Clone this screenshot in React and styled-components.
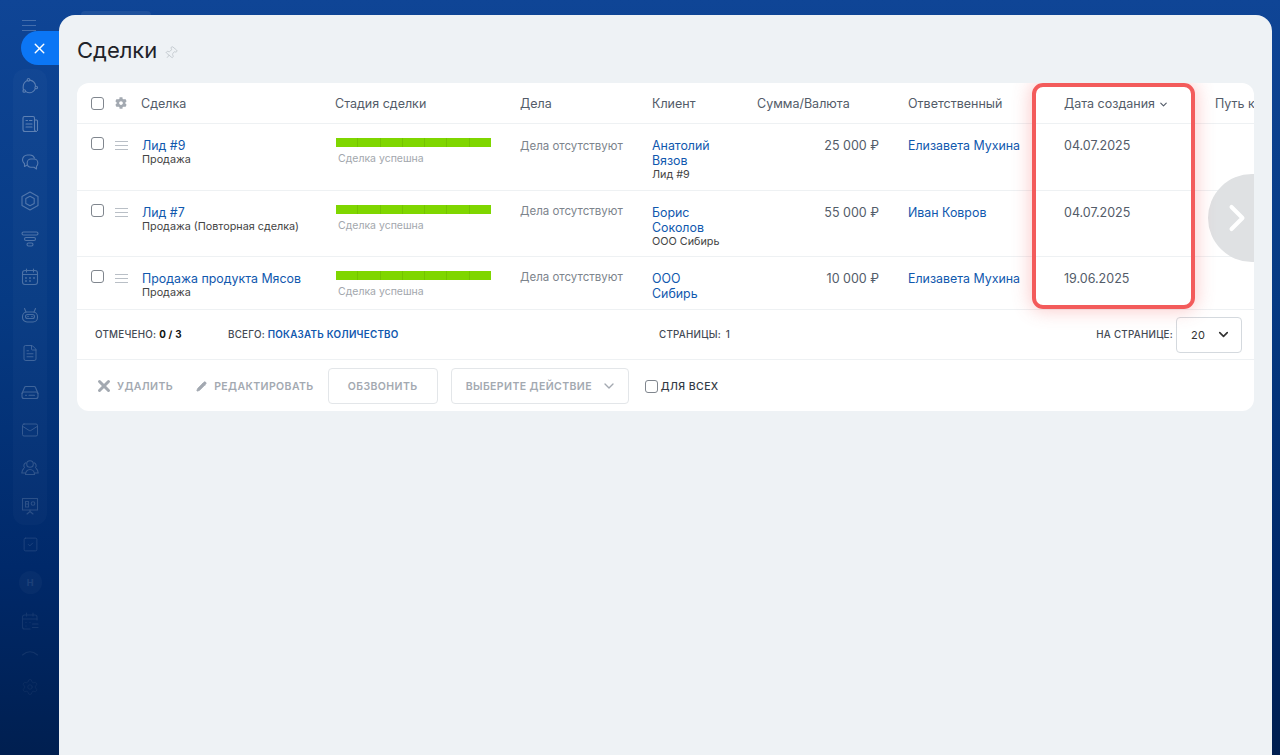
import React from 'react'
import styled, { createGlobalStyle } from 'styled-components'
import { X, ChevronDown, ChevronRight, Settings, Pin, Pencil, FileText, Mail, SquareCheck } from 'lucide-react'
import { FaCog } from 'react-icons/fa'

const GlobalStyle = createGlobalStyle`
  html, body {
    margin: 0;
    height: 100%;
    overflow: hidden;
    font-family: Inter, "Liberation Sans", sans-serif;
  }
  #root { height: 100%; }
`

const Page = styled.div`
  height: 755px;
  display: flex;
  background: linear-gradient(180deg, #0f4596 0%, #063a83 40%, #00296a 75%, #001f50 100%);
`

const Rail = styled.aside`
  width: 59px;
  flex-shrink: 0;
  display: flex;
  flex-direction: column;
  align-items: center;
`

const Burger = styled.div`
  height: 31px;
  padding-top: 20px;
  box-sizing: border-box;
  width: 14px;
  margin-left: -1px;
  & span {
    display: block;
    height: 1px;
    background: #ffffff3a;
    margin-bottom: 4px;
  }
`

const CloseTab = styled.button`
  align-self: flex-end;
  width: 38px;
  height: 34px;
  border: 0;
  padding: 0 2px 0 0;
  border-radius: 17px 0 0 17px;
  background: #0b76f5;
  color: #fff;
  display: flex;
  align-items: center;
  justify-content: center;
`

const IconList = styled.div`
  margin-top: 4px;
  margin-left: 1px;
  display: flex;
  flex-direction: column;
  align-items: center;
`

const IconGroup = styled.div`
  display: flex;
  flex-direction: column;
  align-items: center;
  border-radius: 12px;
  background: #ffffff06;
  & > :first-child { margin-top: -2px; }
`

const IconRow = styled.div`
  height: ${p => p.$h || 38.2}px;
  margin-bottom: ${p => p.$after || 0}px;
  width: 34px;
  display: flex;
  align-items: center;
  justify-content: center;
  color: #fff;
  & > * { opacity: ${p => p.$fade}; }
`

const Letter = styled.span`
  width: 23px;
  height: 23px;
  border-radius: 50%;
  background: #ffffff44;
  font-size: 9px;
  font-weight: 700;
  display: flex;
  align-items: center;
  justify-content: center;
`

const Main = styled.div`
  flex: 1;
  display: flex;
  flex-direction: column;
  padding: 11px 8px 0 0;
`

const PeekTab = styled.div`
  height: 4px;
  width: 70px;
  margin-left: 22px;
  border-radius: 6px 6px 0 0;
  background: #ffffff12;
`

const Sheet = styled.main`
  flex: 1;
  background: #eef2f5;
  border-radius: 16px 16px 0 0;
  padding: 0 18px;
`

const TitleRow = styled.div`
  height: 68px;
  padding-top: 1px;
  box-sizing: border-box;
  display: flex;
  align-items: center;
  gap: 7px;
  & svg {
    color: #c4cad0;
    margin-top: 6px;
    transform: rotate(40deg);
  }
`

const Title = styled.h1`
  margin: 0;
  font-size: 22px;
  font-weight: 400;
  color: #1f2329;
`

const Card = styled.section`
  position: relative;
  overflow: hidden;
  width: 1177px;
  background: #fff;
  border-radius: 12px;
`

const Table = styled.table`
  width: 1242px;
  table-layout: fixed;
  border-collapse: collapse;
  font-size: 12.5px;
`

const Col = styled.col`
  width: ${p => p.$w}px;
`

const Th = styled.th`
  height: 40px;
  padding: 0;
  font-weight: 400;
  text-align: left;
  color: #535c69;
  border-bottom: 1px solid #eef1f3;
  white-space: nowrap;
  overflow: hidden;
`

const SortIcon = styled(ChevronDown)`
  vertical-align: -2px;
  margin-left: -1px;
  color: #535c69;
`

const Td = styled.td`
  padding: 14px 0 0;
  vertical-align: top;
  border-bottom: 1px solid #eef1f3;
  color: #535c69;
  line-height: 15px;
  text-align: ${p => (p.$right ? 'right' : 'left')};
  height: ${p => p.$h}px;
  box-sizing: border-box;
`

const Check = styled.span`
  display: inline-block;
  width: 11px;
  height: 11px;
  border: 1px solid #80868e;
  border-radius: 3px;
  background: #fff;
  margin-left: 14px;
`

const HeadTools = styled.div`
  display: flex;
  align-items: center;
  gap: 11px;
  & svg { color: #a3a9b1; }
`

const Drag = styled.div`
  width: 13px;
  margin: 4px 0 0 11px;
  & span {
    display: block;
    height: 1px;
    margin-bottom: 3px;
    background: #b9bfc6;
  }
`

const RowTools = styled.div`
  display: flex;
  margin-top: -1px;
`

const LinkText = styled.a`
  display: block;
  color: #1058ae;
  font-size: 12.4px;
  line-height: 15px;
  white-space: nowrap;
`

const DealLink = styled(LinkText)`
  margin-left: 1px;
`

const SubText = styled.div`
  color: #444;
  font-size: 10.8px;
  line-height: 13px;
  margin-left: ${p => p.$inset || 0}px;
  white-space: nowrap;
`

const StageBar = styled.div`
  display: flex;
  width: 155px;
  height: 9px;
  margin-left: 1px;
  gap: 1px;
  border-radius: 1px;
  background: #74c400;
  & i { flex: 1; background: #7fd600; }
`

const StageLabel = styled.div`
  color: #a2a7ad;
  font-size: 10.5px;
  line-height: 13px;
  margin: 5px 0 0 3px;
`

const Muted = styled.span`
  display: block;
  margin-top: ${p => p.$shift}px;
  color: #7d848c;
  font-size: 11.5px;
`

const Amount = styled.div`
  padding-right: 29px;
  color: #535c69;
`

const PagerRow = styled.div`
  height: 49px;
  display: grid;
  grid-template-columns: 133px 431px 1fr auto;
  align-items: center;
  padding: 0 12px 0 18px;
  border-bottom: 1px solid #eef1f3;
  font-size: 9.8px;
  font-weight: 500;
  letter-spacing: 0.25px;
  color: #434a54;
  text-transform: uppercase;
`

const Strong = styled.b`
  color: #111;
  font-weight: 700;
`

const ShowCount = styled.a`
  color: #1058ae;
  font-weight: 600;
`

const PageNumber = styled.span`
  margin-left: 2px;
`

const PerPage = styled.div`
  display: flex;
  align-items: center;
  gap: 3px;
`

const PerPageBox = styled.div`
  width: 66px;
  height: 36px;
  box-sizing: border-box;
  border: 1px solid #d4d9de;
  border-radius: 4px;
  display: flex;
  align-items: center;
  justify-content: space-between;
  padding: 0 10px 0 14px;
  font-size: 11px;
  font-weight: 400;
  color: #333;
  & svg { color: #333; }
`

const ActionRow = styled.div`
  height: 51px;
  display: flex;
  align-items: flex-start;
  padding: 8px 0 0 21px;
  box-sizing: border-box;
  font-size: 10.5px;
  font-weight: 600;
  letter-spacing: 0.4px;
  color: #a3a9b1;
`

const ActionLink = styled.div`
  height: 36px;
  display: flex;
  align-items: center;
  gap: ${p => p.$inner}px;
  margin-right: ${p => p.$gap}px;
  & svg { color: #a3a9b1; }
`

const DeleteIcon = styled(X)`
  margin-left: -3px;
`

const EditIcon = styled(Pencil)`
  fill: #a3a9b1;
`

const GhostButton = styled.div`
  height: 36px;
  width: ${p => p.$w}px;
  box-sizing: border-box;
  border: 1px solid #e3e6e9;
  border-radius: 4px;
  display: flex;
  align-items: center;
  justify-content: ${p => (p.$between ? 'space-between' : 'center')};
  padding: ${p => (p.$between ? '0 11px 0 14px' : '0')};
  margin-right: ${p => p.$gap}px;
  & svg { color: #a3a9b1; }
`

const ForAll = styled.label`
  height: 36px;
  display: flex;
  align-items: center;
  gap: 3px;
  color: #333a45;
  font-weight: 500;
  & ${Check} { margin: 0; }
`

const Highlight = styled.div`
  position: absolute;
  left: 955px;
  top: 0;
  width: 163px;
  height: 226px;
  box-sizing: border-box;
  border: 4px solid #f35b5b;
  border-radius: 11px;
  box-shadow: 0 0 18px 2px #f35b5b4d;
  pointer-events: none;
`

const ScrollHint = styled.div`
  position: absolute;
  left: 1131px;
  top: 91px;
  width: 88px;
  height: 88px;
  border-radius: 50%;
  background: #dfe1e3;
  color: #fff;
  display: flex;
  align-items: center;
  padding-left: 7px;
  box-sizing: border-box;
`

/* nav icons drawn by hand, lucide has nothing close for these */
const Svg = ({ children }) => (
  <svg width="18" height="18" viewBox="0 0 18 18" fill="none" stroke="currentColor" strokeWidth="1.1" strokeLinecap="round" strokeLinejoin="round">
    {children}
  </svg>
)

const Orbit = () => (
  <Svg>
    <circle cx="7.500" cy="2.800" r="1.300" /><circle cx="15.200" cy="10.500" r="1.300" /><circle cx="3.200" cy="14" r="1.300" />
    <path d="M6.200 3.400A7 7 0 0 0 2.200 9.500a7 7 0 0 0 .3 3.200M9 3.100a7 7 0 0 1 5.600 6.100M14.300 11.600A7 7 0 0 1 9 15.800a7 7 0 0 1-4.400-1.400" />
  </Svg>
)
const News = () => (
  <Svg>
    <path d="M3.500 1.500h8.500a1.500 1.500 0 0 1 1.500 1.500v11.500a2 2 0 0 0 2 2H4a2 2 0 0 1-2-2V3a1.500 1.500 0 0 1 1.500-1.500z" />
    <path d="M13.500 5h2A1 1 0 0 1 16.500 6v9.500M5 5.500h1.500M8.500 5.500h2.500M5 9h6M5 12h6" />
  </Svg>
)
const Chats = () => (
  <Svg>
    <path d="M5.800 12.200 3.500 13.500v-2.800A5 5 0 0 1 1.500 7a5 5 0 0 1 5-5H9a5 5 0 0 1 4.500 3" />
    <path d="M10 6h3a3.800 3.800 0 0 1 3.800 3.800v.7a3.800 3.800 0 0 1-1.300 2.800V16l-2.500-1.800h-3a3.800 3.800 0 0 1-3.800-3.700v-.7A3.800 3.800 0 0 1 10 6z" />
  </Svg>
)
const Nut = () => (
  <svg width="20" height="20" viewBox="0 0 20 20" fill="none" stroke="currentColor" strokeWidth="1.1" strokeLinejoin="round">
    <path d="M10 1 18 5.500v9L10 19l-8-4.500v-9z" />
    <path d="M10 5.200 14.200 7.600v4.800L10 14.800l-4.200-2.400V7.600z" />
  </svg>
)
const Funnel = () => (
  <Svg>
    <rect x="1" y="2" width="16" height="3" rx="1.500" />
    <rect x="3.500" y="7.500" width="11" height="3" rx="1.500" />
    <rect x="6" y="13" width="6" height="3" rx="1.500" />
  </Svg>
)
const Planner = () => (
  <Svg>
    <rect x="1.500" y="2.500" width="15" height="14" rx="2.500" />
    <path d="M5.500 1v3M12.500 1v3M1.500 6.500h15" />
    <path d="M5 10h.01M9 10h.01M13 10h.01M5 13h.01M9 13h.01" strokeWidth="1.800" />
  </Svg>
)
const Robot = () => (
  <Svg>
    <rect x="1.500" y="6" width="15" height="10" rx="4.500" />
    <path d="M5 6 3.500 2.500M13 6l1.500-3.500" />
    <rect x="4.500" y="8.500" width="9" height="4" rx="2" />
    <path d="M7 10.500h.01M11 10.500h.01" strokeWidth="1.500" />
  </Svg>
)
const Drive = () => (
  <Svg>
    <path d="M1 10.500 3.500 4.500A1.500 1.500 0 0 1 5 3.500h8a1.500 1.500 0 0 1 1.500 1l2.500 6" />
    <rect x="1" y="9" width="16" height="6.500" rx="2" />
    <path d="M4.500 12.300h1M8 12.300h5.500" />
  </Svg>
)
const People = () => (
  <Svg>
    <circle cx="9" cy="5" r="3.300" />
    <path d="M4.500 15.500c0-3 2-5 4.500-5s4.500 2 4.500 5zM4.800 3.800A3 3 0 0 0 3.500 8.500M13.200 3.800A3 3 0 0 1 14.500 8.500M2.800 9.500C1.500 10.500 1 12 .8 14h3M15.200 9.500c1.300 1 1.800 2.500 2 4.500h-3" />
  </Svg>
)
const Board = () => (
  <Svg>
    <rect x="1.500" y="1.500" width="15" height="11.500" />
    <path d="M9 13v1.500M6 17l3-2.500 3 2.500M4.500 4.500h3v5.500h-3zM4.500 7h3" />
    <circle cx="12" cy="6.500" r="1.800" />
  </Svg>
)
const Schedule = () => (
  <Svg>
    <path d="M16 8V5a2 2 0 0 0-2-2H3.500a2 2 0 0 0-2 2v10a2 2 0 0 0 2 2H9" />
    <path d="M5.500 1v3M12 1v3M1.500 7H16M5 10.500h.01M9 10.500h.01M5 14h.01M11.500 12h5.500M11.500 15.500h5.500" />
  </Svg>
)
const Collapse = () => (
  <Svg><path d="M1.500 11Q9 4.500 16.500 11" /></Svg>
)

const groupIcons = [
  { el: <Orbit />, fade: 0.3 },
  { el: <News />, fade: 0.32 },
  { el: <Chats />, fade: 0.3 },
  { el: <Nut />, fade: 0.28 },
  { el: <Funnel />, fade: 0.27 },
  { el: <Planner />, fade: 0.26 },
  { el: <Robot />, fade: 0.25 },
  { el: <FileText size={18} strokeWidth={1.2} />, fade: 0.24 },
  { el: <Drive />, fade: 0.22 },
  { el: <Mail size={18} strokeWidth={1.2} />, fade: 0.2 },
  { el: <People />, fade: 0.17 },
  { el: <Board />, fade: 0.15 },
]

const looseIcons = [
  { el: <SquareCheck size={17} strokeWidth={1.2} />, fade: 0.13 },
  { el: <Letter>H</Letter>, fade: 0.11 },
  { el: <Schedule />, fade: 0.08 },
  { el: <Collapse />, fade: 0.07, h: 26, after: 5 },
  { el: <Settings size={18} strokeWidth={1.2} />, fade: 0.05, h: 32 },
]

const deals = [
  { id: 9, title: 'Лид #9', type: 'Продажа', client: ['Анатолий', 'Вязов'], sub: 'Лид #9', sum: '25 000 ₽', owner: 'Елизавета Мухина', date: '04.07.2025', h: 67, shift: 1 },
  { id: 7, title: 'Лид #7', type: 'Продажа (Повторная сделка)', client: ['Борис', 'Соколов'], sub: 'ООО Сибирь', sum: '55 000 ₽', owner: 'Иван Ковров', date: '04.07.2025', h: 66, shift: -1 },
  { id: 1, title: 'Продажа продукта Мясов', type: 'Продажа', client: ['ООО', 'Сибирь'], sum: '10 000 ₽', owner: 'Елизавета Мухина', date: '19.06.2025', h: 53, shift: -1 },
]

const columns = [64, 194, 185, 132, 105, 151, 156, 151, 104]

export default function App() {
  return (
    <Page>
      <GlobalStyle />
      <Rail>
        <Burger><span /><span /><span /></Burger>
        <CloseTab><X size={17} strokeWidth={2} /></CloseTab>
        <IconList>
          <IconGroup>
            {groupIcons.map((item, i) => (
              <IconRow key={i} $fade={item.fade}>{item.el}</IconRow>
            ))}
          </IconGroup>
          {looseIcons.map((item, i) => (
            <IconRow key={i} $fade={item.fade} $h={item.h} $after={item.after}>{item.el}</IconRow>
          ))}
        </IconList>
      </Rail>
      <Main>
        <PeekTab />
        <Sheet>
          <TitleRow>
            <Title>Сделки</Title>
            <Pin size={14} strokeWidth={1.5} />
          </TitleRow>
          <Card>
            <Table>
              <colgroup>
                {columns.map((w, i) => <Col key={i} $w={w} />)}
              </colgroup>
              <thead>
                <tr>
                  <Th>
                    <HeadTools>
                      <Check /><FaCog size={12} />
                    </HeadTools>
                  </Th>
                  <Th>Сделка</Th>
                  <Th>Стадия сделки</Th>
                  <Th>Дела</Th>
                  <Th>Клиент</Th>
                  <Th>Сумма/Валюта</Th>
                  <Th>Ответственный</Th>
                  <Th>Дата создания <SortIcon size={11} strokeWidth={2.5} /></Th>
                  <Th>Путь к</Th>
                </tr>
              </thead>
              <tbody>
                {deals.map(d => (
                  <tr key={d.id}>
                    <Td $h={d.h}>
                      <RowTools>
                        <Check />
                        <Drag><span /><span /><span /></Drag>
                      </RowTools>
                    </Td>
                    <Td $h={d.h}>
                      <DealLink>{d.title}</DealLink>
                      <SubText $inset={1}>{d.type}</SubText>
                    </Td>
                    <Td $h={d.h}>
                      <StageBar><i /><i /><i /><i /><i /><i /><i /></StageBar>
                      <StageLabel>Сделка успешна</StageLabel>
                    </Td>
                    <Td $h={d.h}><Muted $shift={d.shift}>Дела отсутствуют</Muted></Td>
                    <Td $h={d.h}>
                      {d.client.map(n => <LinkText key={n}>{n}</LinkText>)}
                      {d.sub && <SubText>{d.sub}</SubText>}
                    </Td>
                    <Td $h={d.h} $right><Amount>{d.sum}</Amount></Td>
                    <Td $h={d.h}><LinkText>{d.owner}</LinkText></Td>
                    <Td $h={d.h}>{d.date}</Td>
                    <Td $h={d.h} />
                  </tr>
                ))}
              </tbody>
            </Table>
            <PagerRow>
              <span>Отмечено: <Strong>0 / 3</Strong></span>
              <span>Всего: <ShowCount>показать количество</ShowCount></span>
              <span>Страницы:&nbsp;<PageNumber>1</PageNumber></span>
              <PerPage>
                На странице:
                <PerPageBox>20 <ChevronDown size={15} strokeWidth={2.6} /></PerPageBox>
              </PerPage>
            </PagerRow>
            <ActionRow>
              <ActionLink $gap={23} $inner={4}><DeleteIcon size={18} strokeWidth={4} />УДАЛИТЬ</ActionLink>
              <ActionLink $gap={14} $inner={7}><EditIcon size={11} />РЕДАКТИРОВАТЬ</ActionLink>
              <GhostButton $w={110} $gap={13}>ОБЗВОНИТЬ</GhostButton>
              <GhostButton $w={178} $gap={16} $between>ВЫБЕРИТЕ ДЕЙСТВИЕ <ChevronDown size={16} /></GhostButton>
              <ForAll><Check />ДЛЯ ВСЕХ</ForAll>
            </ActionRow>
            <ScrollHint><ChevronRight size={44} strokeWidth={2.2} /></ScrollHint>
            <Highlight />
          </Card>
        </Sheet>
      </Main>
    </Page>
  )
}
